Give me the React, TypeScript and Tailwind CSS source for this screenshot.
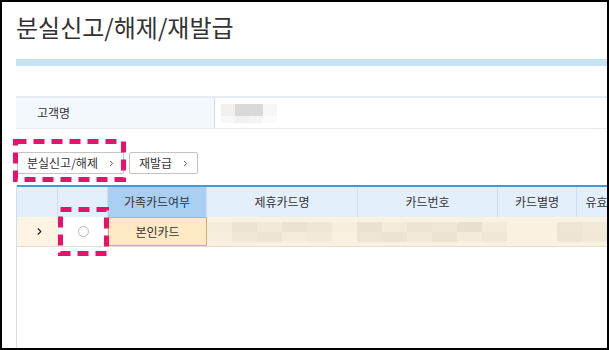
import { ChevronRight } from "lucide-react";

const ko = { fontFamily: "'Noto Sans CJK KR', 'Noto Sans', sans-serif" };

// blurred (masked) cells, top and bottom strips
const nameTop = ["#f1f0ef", "#d9d9d9", "#d9d9d9", "#f7f7f7"];
const nameBot = ["#f8f8f8", "#f1f1f1", "#f4f4f4", "#fbfbfb"];
const rowTop = ["#f6ecdc", "#eee3d2", "#f3e9d8", "#ede2d0", "#f0e6d5", "#f8eedd", "#ece1cf", "#f4eadb", "#efe4d3", "#f1e7d6", "#e9dfcc", "#f5ebda", "#fbf1e0", "#fbf1e0", "#f0e5d4", "#f3e9d9"];
const rowBot = ["#f8eedf", "#f1e7d7", "#efe4d4", "#f6ecdc", "#f3e9d9", "#fbf1e2", "#efe5d5", "#ede3d2", "#f3e9d9", "#eee3d1", "#f5ebdb", "#f1e7d7", "#fbf1e0", "#fbf1e0", "#eee4d3", "#f2e8d8"];

function Dashed({ w, h }: { w: number; h: number }) {
  return (
    <svg width={w} height={h} className="block">
      <rect x="2.5" y="2.5" width={w - 5} height={h - 5} fill="none" stroke="#e8126d" strokeWidth="5" strokeDasharray="11 7" />
    </svg>
  );
}

function Btn({ label }: { label: string }) {
  return (
    <button className="h-[22px] flex items-center gap-[9px] pl-[9px] pr-[7px] bg-white border border-[#c4c4c4] rounded-[2px] text-[12px] text-[#333]" style={ko}>
      {label}
      <ChevronRight size={9} strokeWidth={2.5} className="text-[#444]" />
    </button>
  );
}

const cols = [
  { w: 41, label: "" },
  { w: 50, label: "" },
  { w: 99, label: "가족카드여부" },
  { w: 151, label: "제휴카드명" },
  { w: 140, label: "카드번호" },
  { w: 79, label: "카드별명" },
  { w: 62, label: "유효기간" },
];

export default function App() {
  return (
    <div className="w-[609px] h-[350px] border-2 border-black bg-white overflow-hidden relative" style={ko}>
      {/* title */}
      <div className="pl-[14px] pt-[10px] h-[57px]">
        <h1 className="text-[24px] leading-[30px] text-[#333]">분실신고/해제/재발급</h1>
      </div>
      <div className="ml-[14px] h-[7px] bg-[#c5e3f3]" />

      {/* search form */}
      <div className="ml-[14px] mt-[30px] border-t-2 border-[#72b5de] flex h-[33px] border-b border-[#e6ecf2]">
        <div className="w-[199px] bg-[#f3f8fc] border-r border-[#cfdeec] flex items-center pl-[21px] text-[12px] text-[#333]">
          고객명
        </div>
        <div className="flex flex-col justify-center pl-[6px]">
          <div className="flex h-[12px]">
            {nameTop.map((c, i) => (
              <div key={i} className="w-[14px] h-full" style={{ background: c }} />
            ))}
          </div>
          <div className="flex h-[7px]">
            {nameBot.map((c, i) => (
              <div key={i} className="w-[14px] h-full" style={{ background: c }} />
            ))}
          </div>
        </div>
      </div>

      {/* action buttons */}
      <div className="ml-[15px] mt-[23px] flex gap-[5px] relative">
        <Btn label="분실신고/해제" />
        <Btn label="재발급" />
        <div className="absolute left-[-4px] top-[-13px]">
          <Dashed w={113} h={43} />
        </div>
      </div>

      {/* grid */}
      <div className="ml-[14px] mt-[11px] border-l border-[#d6dde7] h-[200px] relative">
        <div className="border-t-2 border-[#3f9bd9] flex h-[32px]">
          {cols.map((c, i) => (
            <div
              key={i}
              className={`shrink-0 flex items-center justify-center text-[12px] text-[#333] border-r border-[#cddff0] whitespace-nowrap overflow-hidden ${i === 2 ? "bg-[#a9cff2]" : "bg-[#e3effb]"}`}
              style={{ width: c.w }}
            >
              {c.label}
            </div>
          ))}
        </div>
        <div className="flex h-[30px] border-b border-[#e2ddd3]">
          <div className="w-[41px] shrink-0 bg-[#fdf4e4] flex items-center justify-center pl-[3px]">
            <ChevronRight size={11} strokeWidth={2.5} className="text-[#222]" />
          </div>
          <div className="w-[50px] shrink-0 bg-white flex items-center justify-center border-l border-[#eee]">
            <div className="w-[11px] h-[11px] rounded-full border border-[#bdbdbd]" />
          </div>
          <div className="w-[99px] shrink-0 bg-[#fde9c4] border border-[#d4b06c] flex items-center justify-center text-[12px] text-[#333]">
            본인카드
          </div>
          <div className="flex-1 bg-[#fbf1e0] flex flex-col justify-center">
            <div className="flex h-[10px]">
              {rowTop.map((c, i) => (
                <div key={i} className="flex-1 h-full" style={{ background: c }} />
              ))}
            </div>
            <div className="flex h-[10px]">
              {rowBot.map((c, i) => (
                <div key={i} className="flex-1 h-full" style={{ background: c }} />
              ))}
            </div>
          </div>
        </div>
        <div className="absolute left-[41px] top-[22px]">
          <Dashed w={51} h={49} />
        </div>
      </div>
    </div>
  );
}
